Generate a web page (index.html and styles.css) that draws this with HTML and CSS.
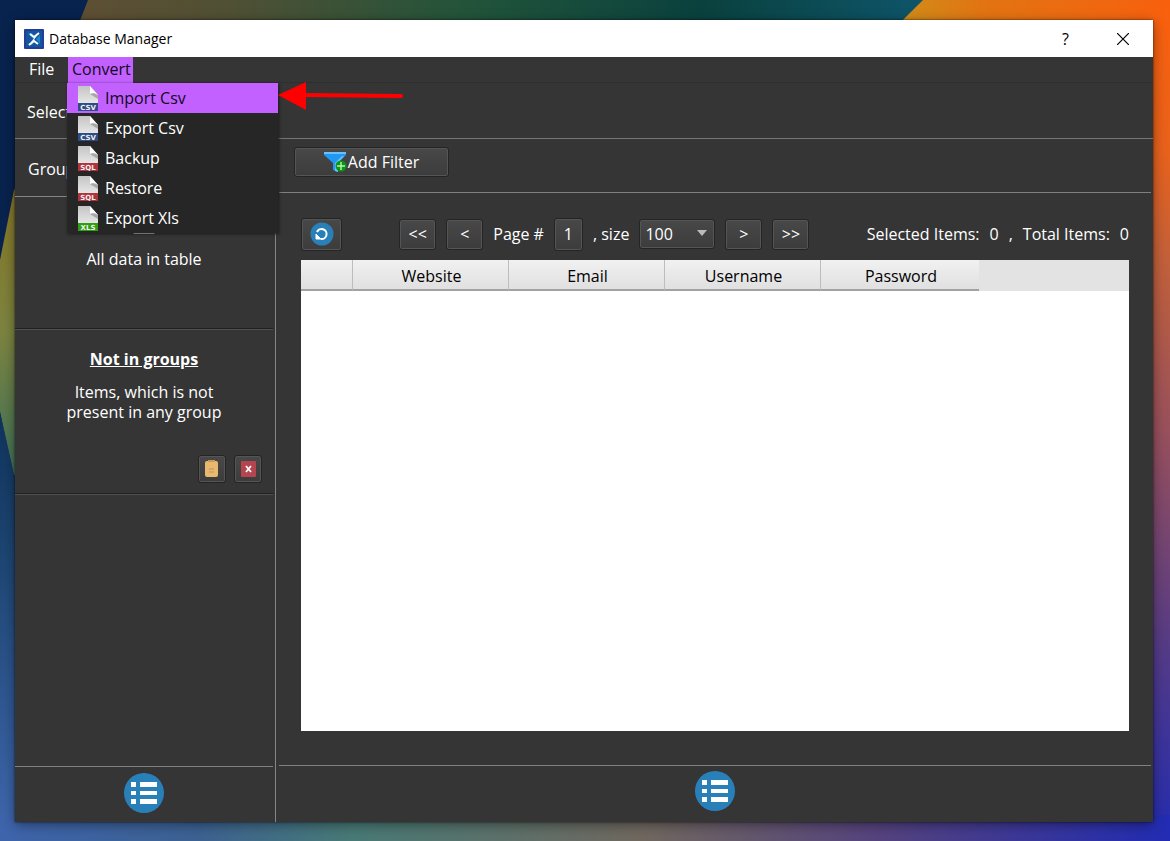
FILE: index.html
```html
<!DOCTYPE html>
<html lang="en">
<head>
    <meta charset="UTF-8">
    <meta name="viewport" content="width=device-width, initial-scale=1.0">
    <title>Database Manager</title>
    <link rel="stylesheet" href="styles.css">
</head>
<body>
    <svg class="wallpaper" viewBox="0 0 1170 841" preserveAspectRatio="none" aria-hidden="true">
        <defs>
            <linearGradient id="topBand"><stop offset="0.07" stop-color="#5e4f34"/><stop offset="0.2" stop-color="#4f5034"/><stop offset="0.4" stop-color="#22543a"/><stop offset="0.6" stop-color="#0a413e"/><stop offset="0.8" stop-color="#0e566c"/></linearGradient>
            <linearGradient id="orange"><stop offset="0.6" stop-color="#d08c18"/><stop offset="0.72" stop-color="#e27412"/><stop offset="1" stop-color="#f8600e"/></linearGradient>
            <linearGradient id="rightBand" x2="0" y2="1"><stop offset="0" stop-color="#f8600e"/><stop offset="0.16" stop-color="#e8621c"/><stop offset="0.3" stop-color="#c0603c"/><stop offset="0.5" stop-color="#98505c"/><stop offset="0.75" stop-color="#583c84"/><stop offset="1" stop-color="#232cb0"/></linearGradient>
            <linearGradient id="leaf" x2="0" y2="1"><stop offset="0" stop-color="#867626"/><stop offset="0.5" stop-color="#7c8440"/><stop offset="1" stop-color="#3f7058"/></linearGradient>
            <linearGradient id="leftBand" x2="0" y2="1"><stop offset="0" stop-color="#10335c"/><stop offset="0.3" stop-color="#1c4470"/><stop offset="1" stop-color="#4068ae"/></linearGradient>
            <linearGradient id="bottomBand"><stop offset="0" stop-color="#3e64ac"/><stop offset="0.17" stop-color="#3c6292"/><stop offset="0.3" stop-color="#487a76"/><stop offset="0.55" stop-color="#70685f"/><stop offset="0.75" stop-color="#55437e"/><stop offset="1" stop-color="#222cb4"/></linearGradient>
        </defs>
        <rect width="1170" height="420" fill="url(#topBand)"/>
        <path d="M923 0H1170V420H500z" fill="url(#orange)"/>
        <path d="M0 0H88L14 190V420H0z" fill="#08234e"/>
        <path d="M14 190L0 260V412L14 475H40V190z" fill="url(#leaf)"/>
        <path d="M0 412L14 475H40V841H0z" fill="url(#leftBand)"/>
        <rect x="1140" y="20" width="30" height="821" fill="url(#rightBand)"/>
        <rect y="815" width="1170" height="26" fill="url(#bottomBand)"/>
    </svg>

    <svg class="sprites" aria-hidden="true">
        <defs>
            <linearGradient id="paper" x2="0" y2="1"><stop offset="0" stop-color="#c4c4c4"/><stop offset="1" stop-color="#f6f6f6"/></linearGradient>
        </defs>
        <symbol id="file" viewBox="0 0 20 25">
            <path d="M0 0H12L20 9V25H0z" fill="url(#paper)"/>
            <path d="M12 0L20 9Q16 6 12 8z" fill="#fff"/>
            <path d="M12 8Q16 6 20 9V13z" fill="#a8a8a8"/>
        </symbol>
        <symbol id="list" viewBox="0 0 40 40">
            <circle cx="20" cy="20" r="20" fill="#2980b9"/>
            <path d="M7 9h5v5H7zM16 9h17v5H16zM7 18h5v4H7zM16 18h17v4H16zM7 26h5v5H7zM16 26h17v5H16z" fill="#fff"/>
        </symbol>
    </svg>

    <div class="window">
        <header class="titlebar">
            <svg class="logo" viewBox="0 0 20 20" aria-hidden="true">
                <rect width="20" height="20" rx="1" fill="#203f96"/>
                <rect x="2" y="2" width="16" height="16" fill="#17549f"/>
                <path d="M4 4L9 10L4 16H8L11 11V9L8 4zM16 6L12 10L16 15z" fill="#1687cf"/>
                <path d="M6 5L10 8L15 4M5 16L10 12L14 15" fill="none" stroke="#fff" stroke-width="2"/>
                <path d="M13 6L7 14" stroke="#fff" stroke-width="1"/>
            </svg>
            <h1>Database Manager</h1>
            <button class="caption" type="button" aria-label="Help">?</button>
            <button class="caption" type="button" aria-label="Close">
                <svg width="12" height="12" viewBox="0 0 12 12"><path d="M0 0L12 12M12 0L0 12" stroke="#000" stroke-width="1.2"/></svg>
            </button>
        </header>

        <nav class="menubar">
            <button type="button">File</button>
            <div class="menu">
                <button class="open" type="button">Convert</button>
                <ul class="dropdown">
                    <li><button class="active" type="button">
                        <svg class="file" viewBox="0 0 20 25"><use href="#file"/><rect y="17" width="20" height="8" fill="#2e4d86"/><text x="10" y="24">CSV</text></svg>Import Csv</button>
                        <svg class="arrow" viewBox="0 0 126 28" aria-hidden="true"><path d="M0 13L28 0V28z" fill="#fe0000"/><path d="M26 13L123 14" stroke="#fe0000" stroke-width="4" stroke-linecap="round"/></svg>
                    </li>
                    <li><button type="button">
                        <svg class="file" viewBox="0 0 20 25"><use href="#file"/><rect y="17" width="20" height="8" fill="#2e4d86"/><text x="10" y="24">CSV</text></svg>Export Csv</button></li>
                    <li><button type="button">
                        <svg class="file" viewBox="0 0 20 25"><use href="#file"/><rect y="17" width="20" height="8" fill="#b0343c"/><text x="10" y="24">SQL</text></svg>Backup</button></li>
                    <li><button type="button">
                        <svg class="file" viewBox="0 0 20 25"><use href="#file"/><rect y="17" width="20" height="8" fill="#b0343c"/><text x="10" y="24">SQL</text></svg>Restore</button></li>
                    <li><button type="button">
                        <svg class="file" viewBox="0 0 20 25"><use href="#file"/><rect y="17" width="20" height="8" fill="#31a010"/><text x="10" y="24">XLS</text></svg>Export Xls</button></li>
                </ul>
            </div>
        </nav>

        <div class="select-row">Select</div>

        <div class="content">
            <aside class="sidebar">
                <div class="groups-row">Groups</div>
                <section class="group">
                    <h2>All</h2>
                    <p>All data in table</p>
                </section>
                <section class="group">
                    <h2>Not in groups</h2>
                    <p>Items, which is not<br>present in any group</p>
                    <div class="group-actions">
                        <button class="btn" type="button" aria-label="Copy">
                            <svg width="14" height="18" viewBox="0 0 14 18"><rect x="0" y="1" width="13" height="16" rx="2" fill="#e9b96e"/><path d="M3 0h7v2H3z" fill="#c89a58"/><path d="M4 9h5M4 12h5" stroke="#c4935a"/></svg>
                        </button>
                        <button class="btn" type="button" aria-label="Delete">
                            <svg width="15" height="16" viewBox="0 0 15 16"><rect width="15" height="16" rx="1" fill="#b4444e"/><path d="M5 5L10 11M10 5L5 11" stroke="#fff" stroke-width="1.8"/></svg>
                        </button>
                    </div>
                </section>
                <footer class="side-footer">
                    <button class="round" type="button" aria-label="Group list"><svg width="40" height="40"><use href="#list"/></svg></button>
                </footer>
            </aside>

            <main class="main">
                <div class="filter-row">
                    <button class="btn filter" type="button">
                        <svg width="24" height="22" viewBox="0 0 24 22" aria-hidden="true">
                            <path d="M0 1H22V4L14 12V21L9 19V12L0 4z" fill="#2196f3"/>
                            <path d="M0 1H22V3H0zM20 5L14 12V21L11 20V12L18 5z" fill="#6cc0f5"/>
                            <circle cx="17" cy="15" r="5.500" fill="#0a9614"/>
                            <path d="M17 11V19M13 15H21" stroke="#b8f5b0" stroke-width="1.400"/>
                        </svg>Add Filter
                    </button>
                </div>

                <div class="panel">
                    <div class="toolbar">
                        <button class="btn refresh" type="button" aria-label="Refresh">
                            <svg width="24" height="24" viewBox="0 0 24 24">
                                <circle cx="12" cy="12" r="11.500" fill="#2980b9"/>
                                <path d="M7 10A5 5 0 1 1 11 17" fill="none" stroke="#fff" stroke-width="2"/>
                                <path d="M6 12V17H11z" fill="#fff" stroke="#fff"/>
                            </svg>
                        </button>
                        <div class="pager">
                            <button class="btn step" type="button">&lt;&lt;</button>
                            <button class="btn step" type="button">&lt;</button>
                            <label for="page">Page #</label>
                            <input class="btn" id="page" type="text" value="1">
                            <label for="size">, size</label>
                            <div class="select">
                                <select class="btn" id="size"><option>100</option></select>
                            </div>
                            <button class="btn step" type="button">&gt;</button>
                            <button class="btn step" type="button">&gt;&gt;</button>
                        </div>
                        <div class="totals">
                            <span>Selected Items:</span><span>0</span><span>,</span><span>Total Items:</span><span>0</span>
                        </div>
                    </div>
                    <div class="grid">
                        <table>
                            <colgroup><col class="col-index"><col class="col-data"><col class="col-data"><col class="col-data"><col class="col-last"><col></colgroup>
                            <thead>
                                <tr><th></th><th>Website</th><th>Email</th><th>Username</th><th>Password</th><td></td></tr>
                            </thead>
                        </table>
                    </div>
                </div>

                <footer class="main-footer">
                    <button class="round" type="button" aria-label="Item list"><svg width="40" height="40"><use href="#list"/></svg></button>
                </footer>
            </main>
        </div>
    </div>
</body>
</html>
```

FILE: styles.css
```css
* {
    box-sizing: border-box;
}
body {
    margin: 0;
    height: 100vh;
    padding: 20px 17px 19px 15px;
    font: 16px/20px "Open Sans", sans-serif;
    color: #fff;
    background: #24365c;
}
h1, h2, p, ul {
    margin: 0;
    padding: 0;
}
button, input, select {
    font: inherit;
    color: inherit;
    margin: 0;
    padding: 0;
    border: 0;
    background: none;
}
svg {
    flex: none;
}
.wallpaper {
    position: absolute;
    top: 0;
    left: 0;
    width: 100%;
    height: 100%;
    z-index: -1;
}
.sprites {
    position: absolute;
    width: 0;
    height: 0;
}
.window {
    display: flex;
    flex-direction: column;
    height: 100%;
    background: #353535;
    box-shadow: 0 0 2px rgba(0, 0, 0, 0.7), 0 3px 12px rgba(0, 0, 0, 0.4);
}

/* title bar */
.titlebar {
    display: flex;
    align-items: center;
    height: 37px;
    padding: 0 2px 0 9px;
    background: #fff;
    color: #000;
}
.logo {
    width: 20px;
    height: 20px;
    margin-right: 5px;
}
.titlebar h1 {
    flex: 1;
    font-size: 14px;
    font-weight: 400;
}
.caption {
    display: flex;
    align-items: center;
    justify-content: center;
    width: 57px;
    height: 35px;
}

/* menus */
.menubar {
    display: flex;
    height: 26px;
    padding-left: 10px;
    border-bottom: 1px solid #2e2e2e;
}
.menubar > button, .menu > button {
    height: 26px;
    padding: 0 4px 2px;
    text-align: left;
}
.menubar > button {
    width: 43px;
}
.menu {
    position: relative;
}
.menu > .open {
    width: 65px;
    color: #12091a;
    background: #c261ff;
}
.dropdown {
    position: absolute;
    top: 26px;
    left: -1px;
    z-index: 2;
    width: 211px;
    list-style: none;
    background: #262626;
    box-shadow: 1px 1px 3px #1a1a1a;
}
.dropdown li {
    position: relative;
}
.dropdown button {
    display: flex;
    align-items: center;
    width: 100%;
    height: 30px;
    padding-left: 11px;
    gap: 7px;
}
.dropdown .active {
    color: #12091a;
    background: #c261ff;
}
.file {
    width: 20px;
    height: 25px;
}
.file text {
    font: bold 7px "DejaVu Sans", sans-serif;
    text-anchor: middle;
    fill: #f0f0f0;
}
.arrow {
    position: absolute;
    top: -1px;
    left: 100%;
    width: 126px;
    height: 28px;
}

/* layout */
.select-row {
    display: flex;
    align-items: center;
    height: 56px;
    padding: 2px 0 0 12px;
    border-bottom: 1px solid #757575;
}
.content {
    display: flex;
    flex: 1;
    min-height: 0;
}
.sidebar {
    display: flex;
    flex-direction: column;
    width: 261px;
    padding-right: 2px;
    border-right: 1px solid #858585;
}
.groups-row {
    display: flex;
    align-items: center;
    height: 58px;
    padding: 2px 0 0 13px;
    border-bottom: 1px solid #858585;
}
.group {
    display: flex;
    flex-direction: column;
    align-items: center;
    min-height: 133px;
    padding-top: 19px;
    text-align: center;
    border-bottom: 1px solid #505050;
    box-shadow: inset 0 -1px #202020;
}
.group h2 {
    margin-bottom: 13px;
    font-size: 16px;
    font-weight: 700;
    text-decoration: underline;
}
.group-actions {
    display: flex;
    align-self: flex-end;
    gap: 8px;
    margin: 33px 11px 11px;
}
.group-actions .btn {
    width: 28px;
    height: 28px;
}
.btn {
    display: flex;
    align-items: center;
    justify-content: center;
    border: 1px solid #242424;
    border-radius: 3px;
    background: linear-gradient(#484848, #3c3c3c);
    box-shadow: inset 0 0 0 1px #555;
}
.side-footer, .main-footer {
    display: flex;
    justify-content: center;
    margin-top: auto;
    height: 57px;
    padding-top: 5px;
    border-top: 1px solid #808080;
}
.side-footer {
    height: 56px;
    padding-top: 6px;
}
.round {
    width: 40px;
    height: 40px;
}
.main {
    display: flex;
    flex-direction: column;
    flex: 1;
    min-width: 0;
    padding: 0 2px 0 3px;
}
.filter-row {
    height: 54px;
    padding: 8px 15px;
    border-bottom: 1px solid #808080;
}
.filter {
    width: 155px;
    height: 30px;
}
.panel {
    display: flex;
    flex-direction: column;
    flex: 1;
    padding: 24px 22px 34px;
}
.toolbar {
    display: flex;
    align-items: center;
    justify-content: space-between;
    height: 34px;
    margin-bottom: 9px;
}
.pager {
    display: flex;
    align-items: center;
    gap: 10px;
}
.refresh {
    width: 41px;
    height: 33px;
}
.step {
    width: 37px;
    height: 31px;
}
#page {
    width: 29px;
    height: 33px;
    text-align: center;
}
.select {
    position: relative;
}
.select::after {
    content: "";
    position: absolute;
    top: 11px;
    right: 8px;
    border: 5px solid transparent;
    border-top: 6px solid #bbb;
    border-bottom: 0;
}
#size {
    width: 76px;
    height: 30px;
    padding-left: 5px;
    appearance: none;
}
.totals {
    display: flex;
    gap: 10px;
}
.grid {
    flex: 1;
    background: #fff;
}
table {
    width: 100%;
    table-layout: fixed;
    border-collapse: separate;
    border-spacing: 0;
    color: #000;
}
.col-index {
    width: 52px;
}
.col-data {
    width: 156px;
}
.col-last {
    width: 158px;
}
th, thead td {
    height: 31px;
    padding: 0;
    font-weight: 400;
    background: #e3e3e3;
}
th {
    padding: 2px 0 0 2px;
    border-right: 1px solid #bdbdbd;
    border-bottom: 2px solid #a2a2a2;
    background: linear-gradient(#f1f1f1, #e0e0e0);
}
th:last-of-type {
    border-right: 0;
}
```
